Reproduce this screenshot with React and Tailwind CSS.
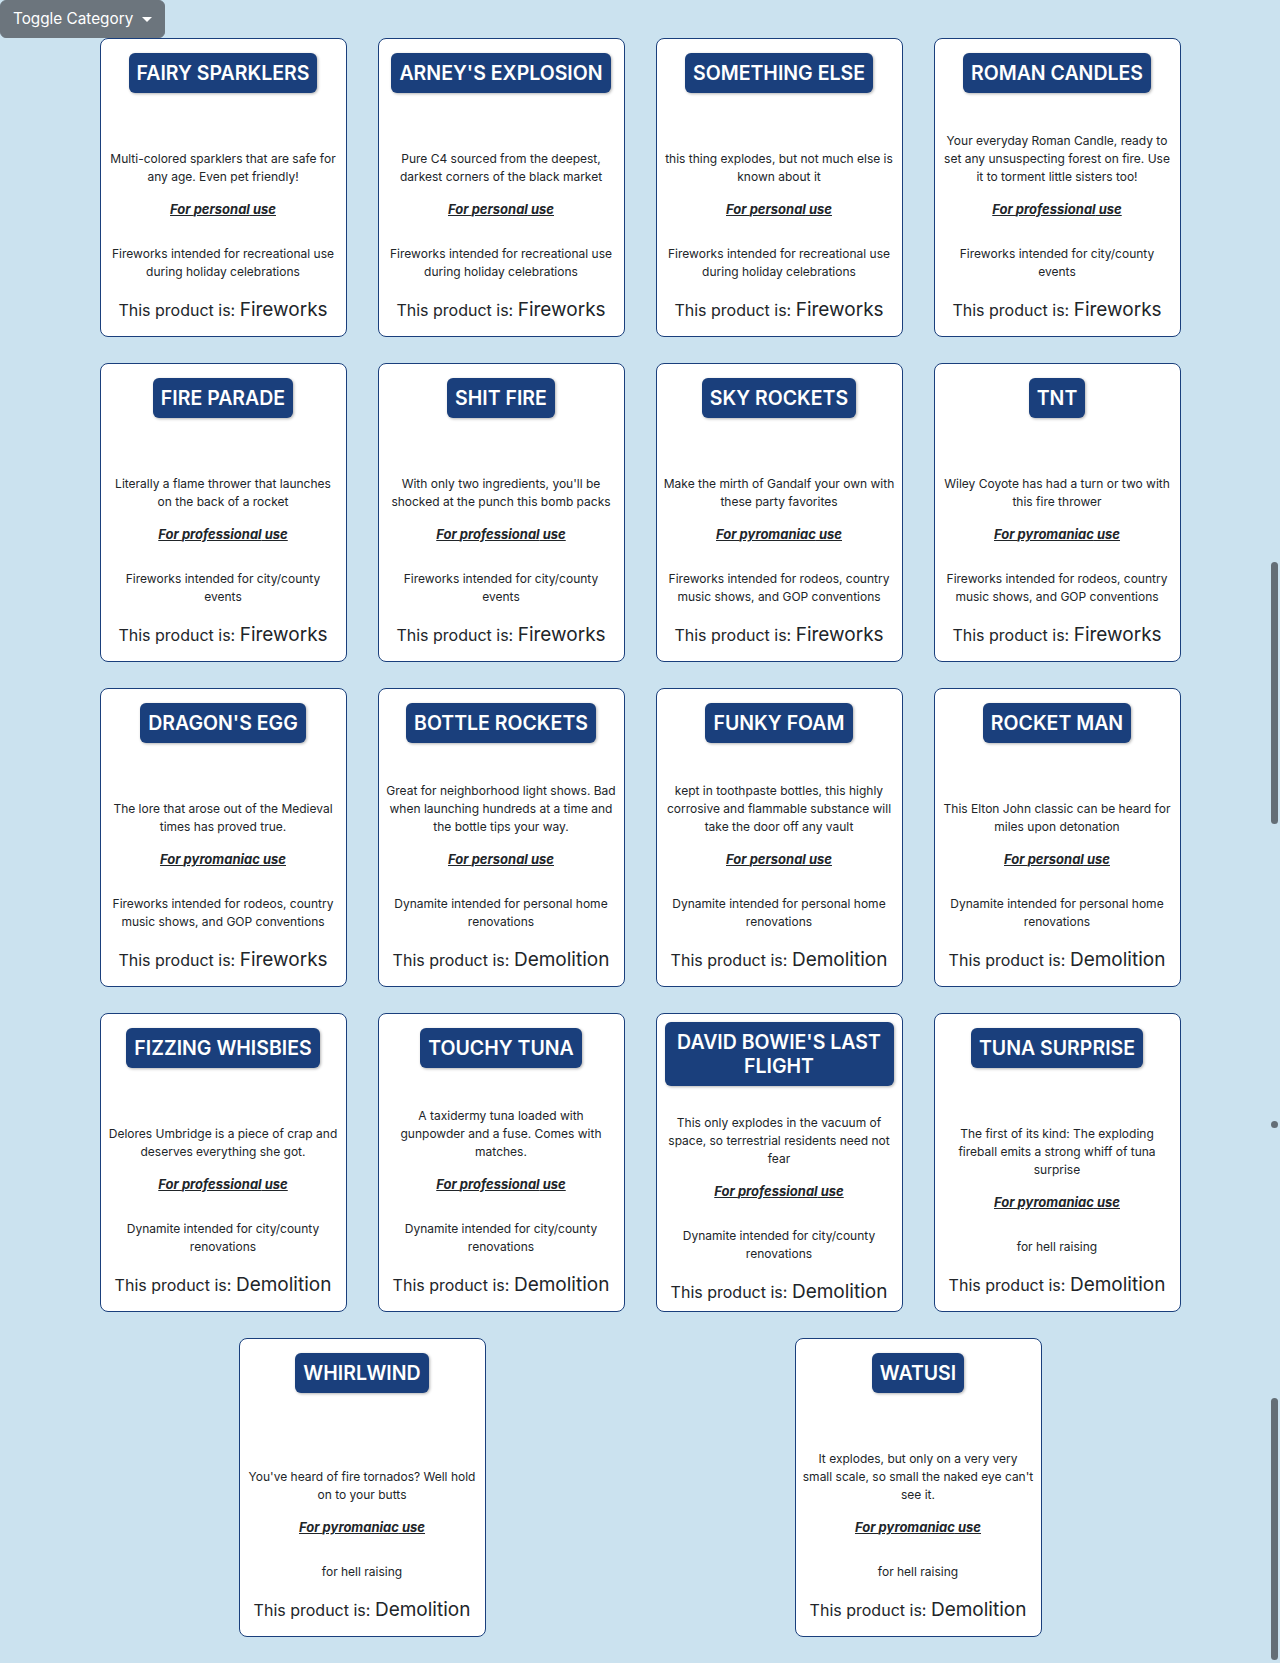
const REC = ["Fireworks intended for recreational use", "during holiday celebrations"];
const CITY_EVENTS = ["Fireworks intended for city/county", "events"];
const RODEOS = ["Fireworks intended for rodeos, country", "music shows, and GOP conventions"];
const HOME = ["Dynamite intended for personal home", "renovations"];
const CITY_RENO = ["Dynamite intended for city/county", "renovations"];
const HELL = ["for hell raising"];

const products = [
  { name: "Fairy Sparklers", desc: ["Multi-colored sparklers that are safe for", "any age. Even pet friendly!"], use: "personal", cat: REC, kind: "Fireworks" },
  { name: "Arney's Explosion", desc: ["Pure C4 sourced from the deepest,", "darkest corners of the black market"], use: "personal", cat: REC, kind: "Fireworks" },
  { name: "Something Else", desc: ["this thing explodes, but not much else is", "known about it"], use: "personal", cat: REC, kind: "Fireworks" },
  { name: "Roman Candles", desc: ["Your everyday Roman Candle, ready to", "set any unsuspecting forest on fire. Use", "it to torment little sisters too!"], use: "professional", cat: CITY_EVENTS, kind: "Fireworks" },
  { name: "Fire Parade", desc: ["Literally a flame thrower that launches", "on the back of a rocket"], use: "professional", cat: CITY_EVENTS, kind: "Fireworks" },
  { name: "Shit Fire", desc: ["With only two ingredients, you'll be", "shocked at the punch this bomb packs"], use: "professional", cat: CITY_EVENTS, kind: "Fireworks" },
  { name: "Sky Rockets", desc: ["Make the mirth of Gandalf your own with", "these party favorites"], use: "pyromaniac", cat: RODEOS, kind: "Fireworks" },
  { name: "TNT", desc: ["Wiley Coyote has had a turn or two with", "this fire thrower"], use: "pyromaniac", cat: RODEOS, kind: "Fireworks" },
  { name: "Dragon's Egg", desc: ["The lore that arose out of the Medieval", "times has proved true."], use: "pyromaniac", cat: RODEOS, kind: "Fireworks" },
  { name: "Bottle Rockets", desc: ["Great for neighborhood light shows. Bad", "when launching hundreds at a time and", "the bottle tips your way."], use: "personal", cat: HOME, kind: "Demolition" },
  { name: "Funky Foam", desc: ["kept in toothpaste bottles, this highly", "corrosive and flammable substance will", "take the door off any vault"], use: "personal", cat: HOME, kind: "Demolition" },
  { name: "Rocket Man", desc: ["This Elton John classic can be heard for", "miles upon detonation"], use: "personal", cat: HOME, kind: "Demolition" },
  { name: "Fizzing Whisbies", desc: ["Delores Umbridge is a piece of crap and", "deserves everything she got."], use: "professional", cat: CITY_RENO, kind: "Demolition" },
  { name: "Touchy Tuna", desc: ["A taxidermy tuna loaded with", "gunpowder and a fuse. Comes with", "matches."], use: "professional", cat: CITY_RENO, kind: "Demolition" },
  { name: "David Bowie's Last\nFlight", wide: true, desc: ["This only explodes in the vacuum of", "space, so terrestrial residents need not", "fear"], use: "professional", cat: CITY_RENO, kind: "Demolition" },
  { name: "Tuna Surprise", desc: ["The first of its kind: The exploding", "fireball emits a strong whiff of tuna", "surprise"], use: "pyromaniac", cat: HELL, kind: "Demolition" },
  { name: "Whirlwind", desc: ["You've heard of fire tornados? Well hold", "on to your butts"], use: "pyromaniac", cat: HELL, kind: "Demolition" },
  { name: "Watusi", desc: ["It explodes, but only on a very very", "small scale, so small the naked eye can't", "see it."], use: "pyromaniac", cat: HELL, kind: "Demolition" },
];

function Lines({ lines }) {
  return lines.map((line) => (
    <span key={line} className="block whitespace-nowrap">
      {line}
    </span>
  ));
}

function ProductCard({ product }) {
  return (
    <div className="w-[247px] h-[299px] mb-[26px] flex flex-col justify-center bg-white border border-[#1a3f7c] rounded-lg">
      <div className="shrink-0 min-h-full flex flex-col justify-between items-center px-2 pt-[14px] pb-[11px] text-center text-[#212529]">
        <h2
          className={
            "mb-[28px] px-2 py-2 bg-[#1a3f7c] text-white text-[19.5px] leading-6 font-semibold uppercase whitespace-pre-line rounded-md shadow-[1px_1px_3px_rgba(0,0,0,0.3)]" +
            (product.wide ? " self-stretch" : "")
          }
        >
          {product.name}
        </h2>
        <div className="flex flex-col items-center">
          <p className="text-[12px] leading-[18px] mb-[13px]">
            <Lines lines={product.desc} />
          </p>
          <p className="text-[13px] leading-5 font-bold italic underline mb-[26px]">
            For {product.use} use
          </p>
          <p className="text-[12px] leading-[18px] mb-[14px]">
            <Lines lines={product.cat} />
          </p>
          <p className="text-[16px] leading-[30px] whitespace-nowrap">
            This product is: <span className="text-[19px]">{product.kind}</span>
          </p>
        </div>
      </div>
    </div>
  );
}

export default function App() {
  return (
    <div className="relative min-h-screen bg-[#cbe2ef] font-['Inter',sans-serif]">
      <div className="flex">
        <button className="flex items-center px-3 py-1.5 bg-[#6c757d] border border-[#6c757d] rounded-md text-white text-[15.3px] leading-6">
          Toggle Category
          <span className="ml-[9px] w-0 h-0 border-t-[5px] border-x-[5px] border-t-white border-x-transparent" />
        </button>
      </div>

      <div className="w-[1112px] mx-auto flex flex-wrap justify-around">
        {products.map((p) => (
          <ProductCard key={p.name} product={p} />
        ))}
      </div>

      {/* overlay scrollbars from the stitched capture */}
      <div className="absolute right-[2px] top-[562px] w-[7px] h-[262px] rounded-full bg-[#646e76]" />
      <div className="absolute right-[2px] top-[1121px] w-[7px] h-[7px] rounded-full bg-[#646e76]" />
      <div className="absolute right-[2px] top-[1398px] w-[7px] h-[262px] rounded-full bg-[#646e76]" />
    </div>
  );
}
